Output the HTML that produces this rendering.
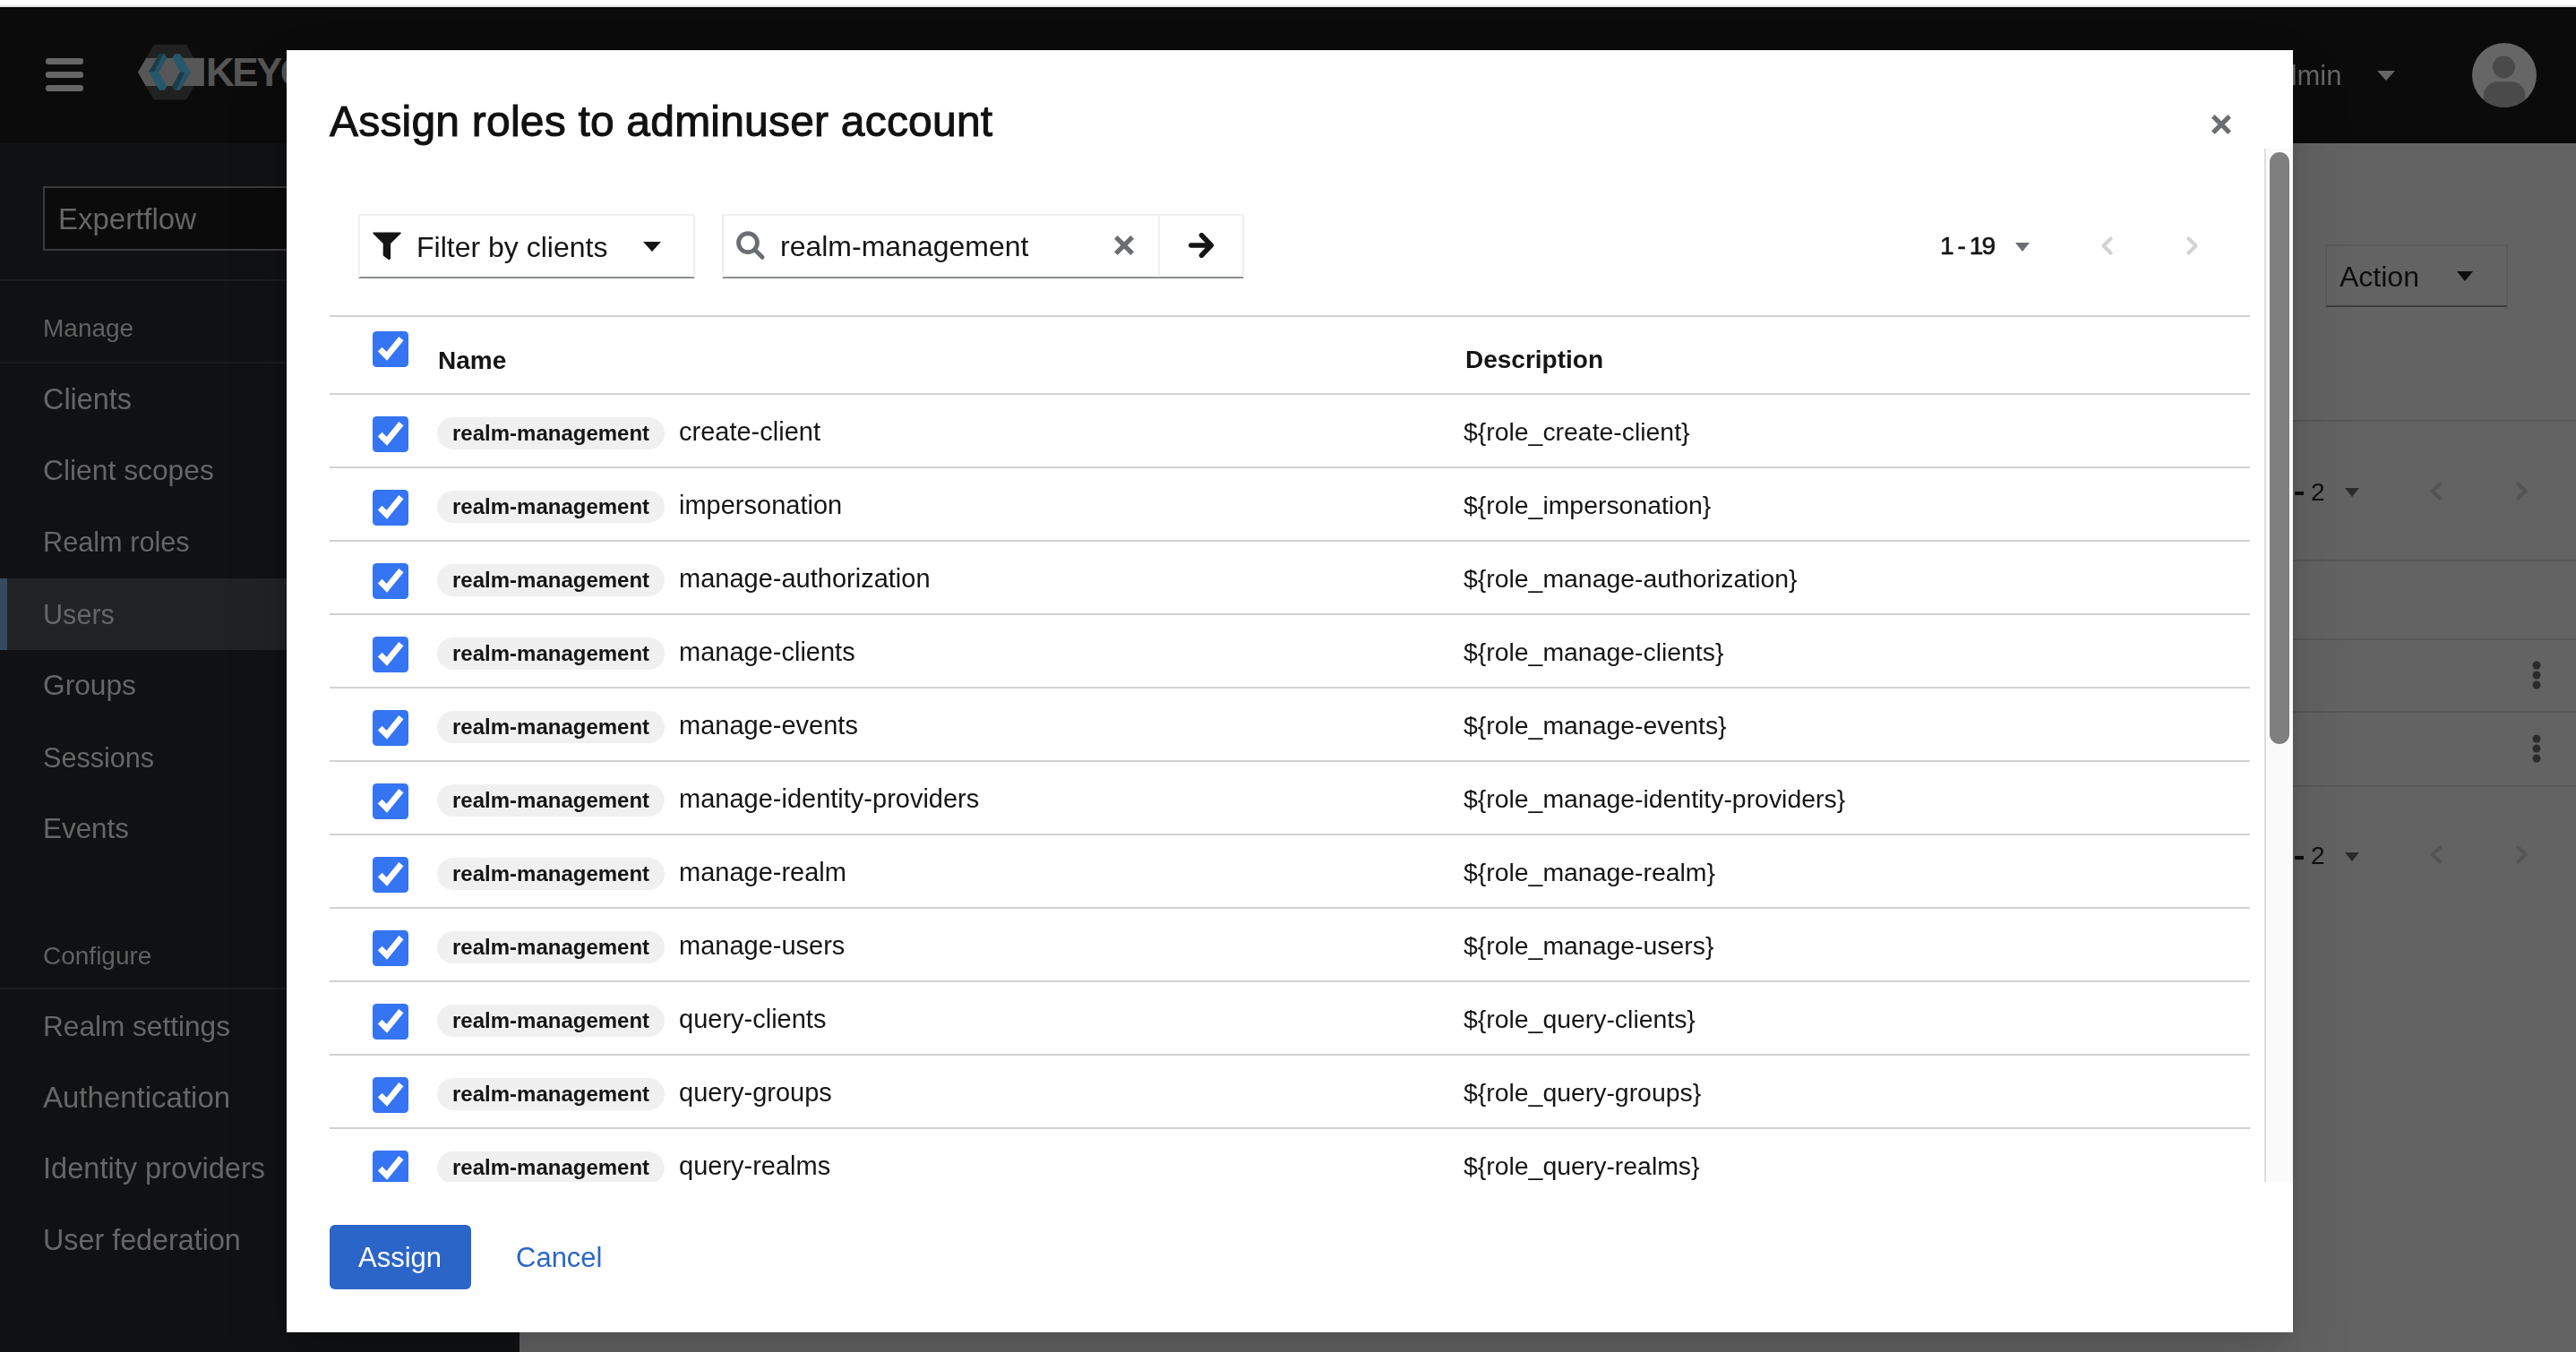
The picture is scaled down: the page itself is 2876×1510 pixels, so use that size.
<!DOCTYPE html>
<html><head><meta charset="utf-8">
<style>
*{box-sizing:border-box;margin:0;padding:0}
html,body{width:2876px;height:1510px;overflow:hidden;background:#fff;font-family:"Liberation Sans",sans-serif}
.a{position:absolute}
.t{position:absolute;white-space:nowrap;line-height:1}
#topline{left:0;top:6px;width:2876px;height:1px;background:#dcdcdd}
#topline2{left:0;top:7px;width:2876px;height:1px;background:#e6e6e8}
#topblack{left:0;top:8px;width:2876px;height:1px;background:#000}
#header{left:0;top:9px;width:2876px;height:151px;background:#0b0b0b}
#sidebar{left:0;top:160px;width:580px;height:1350px;background:#101113}
#content{left:580px;top:160px;width:2296px;height:1350px;background:#636363}
.bar{left:51px;width:42px;height:7px;border-radius:3px;background:#666}
.nav{left:48px;font-size:32px;color:#666}
.sect{left:48px;font-size:28px;color:#616161}
.div{left:0;width:580px;height:2px;background:#1c1d1f}
#modal{left:320px;top:56px;width:2240px;height:1432px;background:#fff;box-shadow:0 32px 64px rgba(3,3,3,.16),0 0 16px rgba(3,3,3,.1);overflow:hidden}
.ln{left:48px;width:2144px;height:2px;background:#d2d2d2}
.chip{width:254px;height:36px;border-radius:18px;background:#f0f0f0}
.chipt{font-size:24px;font-weight:700;color:#151515}
.cell{font-size:29px;color:#151515}
.desc{font-size:28.4px;color:#151515}
.th{font-size:28px;font-weight:700;color:#151515}
.box{border:2px solid #f0f0f0;border-bottom-color:#8a8d90}
.bgl{left:580px;width:2296px;height:2px;background:#575757}
.t{will-change:transform}
</style></head><body>
<div class="a" id="topline"></div><div class="a" id="topline2"></div><div class="a" id="topblack"></div>
<div class="a" id="header"></div>
<div class="a" id="sidebar"></div>
<div class="a" id="content"></div>


<!-- background page content (dimmed) -->
<div class="a" style="left:2596px;top:273px;width:204px;height:70px;border:2px solid #5b5b5b;border-bottom-color:#3e3e3e"></div>
<div class="t" style="left:2612px;top:292.5px;font-size:32px;color:#0e0e0e">Action</div>
<svg class="a" style="left:2743px;top:303px" width="18" height="11"><polygon points="0,0 18,0 9,11" fill="#0e0e0e"/></svg>
<div class="a bgl" style="top:469px"></div>
<div class="a bgl" style="top:625px"></div>
<div class="a bgl" style="top:713px"></div>
<div class="a bgl" style="top:794px"></div>
<div class="a bgl" style="top:877px"></div>
<div class="a" style="left:2562px;top:549px;width:10.3px;height:4px;background:#0e0e0e"></div>
<div class="t" style="left:2579.7px;top:535.6px;font-size:28px;color:#0e0e0e">2</div>
<svg class="a" style="left:2618px;top:545px" width="16" height="10"><polygon points="0,0 16,0 8,10" fill="#2a2b2d"/></svg>
<svg class="a" style="left:2712px;top:537.5px" width="16" height="21"><path d="M12 2.5 L4 10.5 L12 18.5" fill="none" stroke="#545454" stroke-width="4" stroke-linecap="round" stroke-linejoin="round"/></svg>
<svg class="a" style="left:2808px;top:537.5px" width="16" height="21"><path d="M3.5 2.5 L11.5 10.5 L3.5 18.5" fill="none" stroke="#545454" stroke-width="4" stroke-linecap="round" stroke-linejoin="round"/></svg>
<div class="a" style="left:2562px;top:955.5px;width:10.3px;height:4px;background:#0e0e0e"></div>
<div class="t" style="left:2579.7px;top:942.1px;font-size:28px;color:#0e0e0e">2</div>
<svg class="a" style="left:2618px;top:951.5px" width="16" height="10"><polygon points="0,0 16,0 8,10" fill="#2a2b2d"/></svg>
<svg class="a" style="left:2712px;top:944.0px" width="16" height="21"><path d="M12 2.5 L4 10.5 L12 18.5" fill="none" stroke="#545454" stroke-width="4" stroke-linecap="round" stroke-linejoin="round"/></svg>
<svg class="a" style="left:2808px;top:944.0px" width="16" height="21"><path d="M3.5 2.5 L11.5 10.5 L3.5 18.5" fill="none" stroke="#545454" stroke-width="4" stroke-linecap="round" stroke-linejoin="round"/></svg>
<svg class="a" style="left:2826px;top:737px" width="12" height="34"><circle cx="6" cy="6" r="4.5" fill="#2a2b2d"/><circle cx="6" cy="17" r="4.5" fill="#2a2b2d"/><circle cx="6" cy="28" r="4.5" fill="#2a2b2d"/></svg>
<svg class="a" style="left:2826px;top:818.9px" width="12" height="34"><circle cx="6" cy="6" r="4.5" fill="#2a2b2d"/><circle cx="6" cy="17" r="4.5" fill="#2a2b2d"/><circle cx="6" cy="28" r="4.5" fill="#2a2b2d"/></svg>

<!-- header items -->
<div class="a bar" style="top:65px"></div>
<div class="a bar" style="top:80px"></div>
<div class="a bar" style="top:95px"></div>

<svg class="a" style="left:0;top:0" width="330" height="130" viewBox="0 0 330 130">
  <polygon points="154,80.7 171.9,49.8 207.9,49.8 225.8,80.7 207.9,111.6 171.9,111.6" fill="#212121"/>
  <polygon points="154,80.7 163.2,64.8 227.8,64.8 227.8,95.9 162.8,95.9" fill="#575757"/>
  <polygon points="177.8,60.3 183.8,60.3 186.2,64.5 177.8,80.5 166,80.5" fill="#245367"/>
  <polygon points="177.8,60.3 182.5,60.3 172,80.5 166,80.5" fill="#1b3b49"/>
  <polygon points="166,80.5 177.8,80.5 186.2,96.6 183.8,100.8 177.8,100.8" fill="#25586d"/>
  <polygon points="200.9,60.3 195,60.3 192.5,64.5 200.9,80.5 212.8,80.5" fill="#25586d"/>
  <polygon points="212.8,80.5 200.9,80.5 192.5,96.6 195,100.8 200.9,100.8" fill="#245367"/>
  <polygon points="200.9,80.5 206,80.5 196.5,100.8 192.5,96.6" fill="#1b3b49"/>
  <text x="230" y="95.9" font-family="Liberation Sans" font-weight="700" font-size="44" fill="#555" letter-spacing="-2.6">KEYCLOAK</text>
</svg>

<div class="t" style="left:2530px;top:68.8px;font-size:31px;color:#666">admin</div>
<svg class="a" style="left:2654px;top:79px" width="20" height="11" viewBox="0 0 20 11"><polygon points="0,0 20,0 10,11" fill="#666"/></svg>
<svg class="a" style="left:2760px;top:48.3px" width="72" height="72" viewBox="0 0 72 72">
  <defs><clipPath id="cc"><circle cx="36" cy="36" r="36"/></clipPath></defs>
  <circle cx="36" cy="36" r="36" fill="#666"/>
  <g clip-path="url(#cc)" fill="#4a4a4a"><circle cx="35.5" cy="26.9" r="12.5"/><rect x="13" y="43.3" width="46.2" height="40" rx="15"/></g>
</svg>

<!-- sidebar -->
<div class="a" style="left:48px;top:208px;width:300px;height:72px;border:2px solid #3a3a3a;background:#0b0b0b"></div>
<div class="t nav" style="left:64.5px;top:228.4px;font-size:33px">Expertflow</div>
<div class="a div" style="top:312px"></div>
<div class="t sect" style="top:353px">Manage</div>
<div class="a div" style="top:404px"></div>
<div class="t nav" style="top:429.77px;font-size:32.4px">Clients</div>
<div class="t nav" style="top:510.08px;font-size:31.8px">Client scopes</div>
<div class="t nav" style="top:591.01px;font-size:30.7px">Realm roles</div>
<div class="a" style="left:0;top:646px;width:580px;height:80px;background:#212224"></div>
<div class="a" style="left:0;top:646px;width:8px;height:80px;background:#354a60"></div>
<div class="t nav" style="top:671.1px;font-size:30.6px">Users</div>
<div class="t nav" style="top:750.07px;font-size:31.7px">Groups</div>
<div class="t nav" style="top:830.8px;font-size:30.6px">Sessions</div>
<div class="t nav" style="top:910.02px;font-size:31.4px">Events</div>
<div class="t sect" style="top:1054px">Configure</div>
<div class="a div" style="top:1103px"></div>
<div class="t nav" style="top:1131.25px;font-size:31.6px">Realm settings</div>
<div class="t nav" style="top:1209.07px;font-size:33px">Authentication</div>
<div class="t nav" style="top:1289.4px;font-size:32.6px">Identity providers</div>
<div class="t nav" style="top:1369.16px;font-size:32.3px">User federation</div>

<!-- MODAL -->
<div class="a" id="modal"></div>

<!-- MODAL CONTENT -->
<svg width="0" height="0" style="position:absolute"><defs>
<g id="chk"><rect x="0" y="0" width="40" height="40" rx="4.5" fill="#3574f3"/><path d="M8.2 20.1 L15.85 27.85 L31.9 8.1" fill="none" stroke="#fff" stroke-width="6.7" stroke-linejoin="miter"/></g>
<g id="xx"><path d="M1.84 1.84 L20.16 20.16 M20.16 1.84 L1.84 20.16" stroke="#6a6e73" stroke-width="5.2"/></g>
</defs></svg>
<div class="t" style="left:368px;top:112px;font-size:48px;color:#111;-webkit-text-stroke:1px #111;letter-spacing:0.2px">Assign roles to adminuser account</div>
<svg class="a" style="left:2469px;top:128px" width="22" height="22"><use href="#xx"/></svg>

<div class="a" style="left:320px;top:166px;width:2209px;height:1154px;overflow:hidden">
  <div class="a box" style="left:80px;top:73px;width:376px;height:72px"></div>
  <svg class="a" style="left:96px;top:92.5px" width="32" height="32"><polygon points="1,1.2 31,1.2 19.3,12.8 19.3,29.4 18.4,30.4 12.5,26 12.5,12.8" fill="#151515" stroke="#151515" stroke-width="1.6" stroke-linejoin="round"/></svg>
  <div class="t" style="left:145px;top:93.9px;font-size:32px;color:#151515">Filter by clients</div>
  <svg class="a" style="left:398px;top:104px" width="20" height="11"><polygon points="0,0 20,0 10,11" fill="#151515"/></svg>

  <div class="a box" style="left:486px;top:73px;width:583px;height:72px"></div>
  <div class="a" style="left:973px;top:73px;width:2px;height:69px;background:#f0f0f0"></div>
  <svg class="a" style="left:502px;top:91.7px" width="32" height="32"><circle cx="13" cy="13.2" r="10.45" fill="none" stroke="#6a6e73" stroke-width="4.8"/><path d="M20.5 20.7 L29 29.2" stroke="#6a6e73" stroke-width="4.8" stroke-linecap="round"/></svg>
  <div class="t" style="left:550.6px;top:93.3px;font-size:32px;color:#151515">realm-management</div>
  <svg class="a" style="left:924px;top:97px" width="22" height="22"><use href="#xx"/></svg>
  <svg class="a" style="left:1007px;top:94px" width="28" height="28"><path d="M2.75 14 L25 14 M14.5 2.75 L25.25 14 L14.5 25.25" fill="none" stroke="#151515" stroke-width="5.5" stroke-linecap="round" stroke-linejoin="round"/></svg>

  <div class="t" style="left:1846px;top:95.3px;font-size:28px;color:#151515;letter-spacing:-1.9px;-webkit-text-stroke:0.6px #151515">1 - 19</div>
  <svg class="a" style="left:1930px;top:105px" width="16" height="10"><polygon points="0,0 16,0 8,10" fill="#6a6e73"/></svg>
  <svg class="a" style="left:2025px;top:97.5px" width="15" height="21"><path d="M11.5 2.5 L3.5 10.5 L11.5 18.5" fill="none" stroke="#d2d2d2" stroke-width="4" stroke-linecap="round" stroke-linejoin="round"/></svg>
  <svg class="a" style="left:2120px;top:97.5px" width="15" height="21"><path d="M3.5 2.5 L11.5 10.5 L3.5 18.5" fill="none" stroke="#d2d2d2" stroke-width="4" stroke-linecap="round" stroke-linejoin="round"/></svg>

  <div class="a ln" style="top:186px"></div>
  <svg class="a" style="left:96px;top:204px" width="40" height="40"><use href="#chk"/></svg>
  <div class="t th" style="left:169px;top:222.8px">Name</div>
  <div class="t th" style="left:1315.5px;top:222.3px">Description</div>
<div class="a ln" style="top:273px"></div>
<svg class="a" style="left:96px;top:299px" width="40" height="40"><use href="#chk"/></svg>
<div class="a chip" style="left:168px;top:300px"></div>
<div class="t chipt" style="left:184.6px;top:305.7px">realm-management</div>
<div class="t cell" style="left:437.5px;top:302.45px">create-client</div>
<div class="t desc" style="left:1314px;top:301.66px">${role_create-client}</div>
<div class="a ln" style="top:355px"></div>
<svg class="a" style="left:96px;top:381px" width="40" height="40"><use href="#chk"/></svg>
<div class="a chip" style="left:168px;top:382px"></div>
<div class="t chipt" style="left:184.6px;top:387.7px">realm-management</div>
<div class="t cell" style="left:437.5px;top:384.45px">impersonation</div>
<div class="t desc" style="left:1314px;top:383.66px">${role_impersonation}</div>
<div class="a ln" style="top:437px"></div>
<svg class="a" style="left:96px;top:463px" width="40" height="40"><use href="#chk"/></svg>
<div class="a chip" style="left:168px;top:464px"></div>
<div class="t chipt" style="left:184.6px;top:469.7px">realm-management</div>
<div class="t cell" style="left:437.5px;top:466.45px">manage-authorization</div>
<div class="t desc" style="left:1314px;top:465.66px">${role_manage-authorization}</div>
<div class="a ln" style="top:519px"></div>
<svg class="a" style="left:96px;top:545px" width="40" height="40"><use href="#chk"/></svg>
<div class="a chip" style="left:168px;top:546px"></div>
<div class="t chipt" style="left:184.6px;top:551.7px">realm-management</div>
<div class="t cell" style="left:437.5px;top:548.45px">manage-clients</div>
<div class="t desc" style="left:1314px;top:547.66px">${role_manage-clients}</div>
<div class="a ln" style="top:601px"></div>
<svg class="a" style="left:96px;top:627px" width="40" height="40"><use href="#chk"/></svg>
<div class="a chip" style="left:168px;top:628px"></div>
<div class="t chipt" style="left:184.6px;top:633.7px">realm-management</div>
<div class="t cell" style="left:437.5px;top:630.45px">manage-events</div>
<div class="t desc" style="left:1314px;top:629.66px">${role_manage-events}</div>
<div class="a ln" style="top:683px"></div>
<svg class="a" style="left:96px;top:709px" width="40" height="40"><use href="#chk"/></svg>
<div class="a chip" style="left:168px;top:710px"></div>
<div class="t chipt" style="left:184.6px;top:715.7px">realm-management</div>
<div class="t cell" style="left:437.5px;top:712.45px">manage-identity-providers</div>
<div class="t desc" style="left:1314px;top:711.66px">${role_manage-identity-providers}</div>
<div class="a ln" style="top:765px"></div>
<svg class="a" style="left:96px;top:791px" width="40" height="40"><use href="#chk"/></svg>
<div class="a chip" style="left:168px;top:792px"></div>
<div class="t chipt" style="left:184.6px;top:797.7px">realm-management</div>
<div class="t cell" style="left:437.5px;top:794.45px">manage-realm</div>
<div class="t desc" style="left:1314px;top:793.66px">${role_manage-realm}</div>
<div class="a ln" style="top:847px"></div>
<svg class="a" style="left:96px;top:873px" width="40" height="40"><use href="#chk"/></svg>
<div class="a chip" style="left:168px;top:874px"></div>
<div class="t chipt" style="left:184.6px;top:879.7px">realm-management</div>
<div class="t cell" style="left:437.5px;top:876.45px">manage-users</div>
<div class="t desc" style="left:1314px;top:875.66px">${role_manage-users}</div>
<div class="a ln" style="top:929px"></div>
<svg class="a" style="left:96px;top:955px" width="40" height="40"><use href="#chk"/></svg>
<div class="a chip" style="left:168px;top:956px"></div>
<div class="t chipt" style="left:184.6px;top:961.7px">realm-management</div>
<div class="t cell" style="left:437.5px;top:958.45px">query-clients</div>
<div class="t desc" style="left:1314px;top:957.66px">${role_query-clients}</div>
<div class="a ln" style="top:1011px"></div>
<svg class="a" style="left:96px;top:1037px" width="40" height="40"><use href="#chk"/></svg>
<div class="a chip" style="left:168px;top:1038px"></div>
<div class="t chipt" style="left:184.6px;top:1043.7px">realm-management</div>
<div class="t cell" style="left:437.5px;top:1040.45px">query-groups</div>
<div class="t desc" style="left:1314px;top:1039.66px">${role_query-groups}</div>
<div class="a ln" style="top:1093px"></div>
<svg class="a" style="left:96px;top:1119px" width="40" height="40"><use href="#chk"/></svg>
<div class="a chip" style="left:168px;top:1120px"></div>
<div class="t chipt" style="left:184.6px;top:1125.7px">realm-management</div>
<div class="t cell" style="left:437.5px;top:1122.45px">query-realms</div>
<div class="t desc" style="left:1314px;top:1121.66px">${role_query-realms}</div>
</div>

<div class="a" style="left:2528px;top:166px;width:32px;height:1154px;background:#fafafa;border-left:2px solid #dedede;border-right:1px solid #efefef"></div>
<div class="a" style="left:2534px;top:170px;width:22px;height:661px;border-radius:11px;background:#7f7f7f"></div>

<div class="a" style="left:368px;top:1368px;width:158px;height:72px;border-radius:6px;background:#2b65c8"></div>
<div class="t" style="left:400px;top:1389.3px;font-size:31px;color:#fff">Assign</div>
<div class="t" style="left:575.5px;top:1388.8px;font-size:31px;color:#2b66c9">Cancel</div>


</body></html>
